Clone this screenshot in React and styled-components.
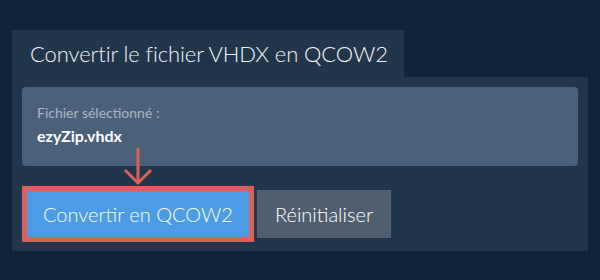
import styled, { createGlobalStyle } from "styled-components";

const Global = createGlobalStyle`
    html, body {
        margin: 0;
        background: #0f2339;
        font-family: Lato, "Open Sans", sans-serif;
    }
`
const Page = styled.div`
    padding: 30px 12px 0 12px;
    width: 576px;
`
const Tab = styled.div`
    display: inline-block;
    background: #22364b;
    color: #f1f4f7;
    font-size: 22px;
    font-weight: 300;
    letter-spacing: -0.1px;
    height: 47px;
    line-height: 47px;
    padding: 0 16px 0 18px;
`
const Panel = styled.div`
    background: #22364b;
    padding: 10px 10px 9px 10px;
`
const FileCard = styled.div`
    background: #4b6179;
    border-radius: 4px;
    height: 79px;
    box-sizing: border-box;
    padding: 18px 15px 0 15px;
`
const Label = styled.div`
    color: #aab6c3;
    font-size: 14px;
    line-height: 16px;
`
const FileName = styled.div`
    color: #ffffff;
    font-size: 16px;
    font-weight: 700;
    line-height: 18px;
    margin-top: 6px;
`
const Actions = styled.div`
    position: relative;
    display: flex;
    align-items: center;
    gap: 3px;
    margin-top: 20px;
`
const Button = styled.button`
    font-family: Lato, "Open Sans", sans-serif;
    font-size: 20px;
    font-weight: 300;
    color: #ffffff;
    border: ${p => (p.$highlight ? "5px solid #db5f5b" : "none")};
    background: ${p => (p.$primary ? "#4b9be6" : "#4f5f6f")};
    height: ${p => (p.$highlight ? "56px" : "48px")};
    padding: 0 ${p => (p.$highlight ? "16px" : "18px")};
    margin: 0;
    cursor: pointer;
`
const Arrow = styled.svg`
    position: absolute;
    left: 101px;
    top: -38px;
    pointer-events: none;
`

const App = () => {
    return (
        <>
            <Global />
            <Page>
                <Tab>Convertir le fichier VHDX en QCOW2</Tab>
                <Panel>
                    <FileCard>
                        <Label>Fichier sélectionné :</Label>
                        <FileName>ezyZip.vhdx</FileName>
                    </FileCard>
                    <Actions>
                        <Arrow width="30" height="38" viewBox="0 0 30 38">
                            <path d="M15 0 V35 M2 22 L15 35 L28 22" fill="none" stroke="#db5f5b" strokeWidth="3" />
                        </Arrow>
                        <Button $primary $highlight>Convertir en QCOW2</Button>
                        <Button>Réinitialiser</Button>
                    </Actions>
                </Panel>
            </Page>
        </>
    )
};

export default App;
